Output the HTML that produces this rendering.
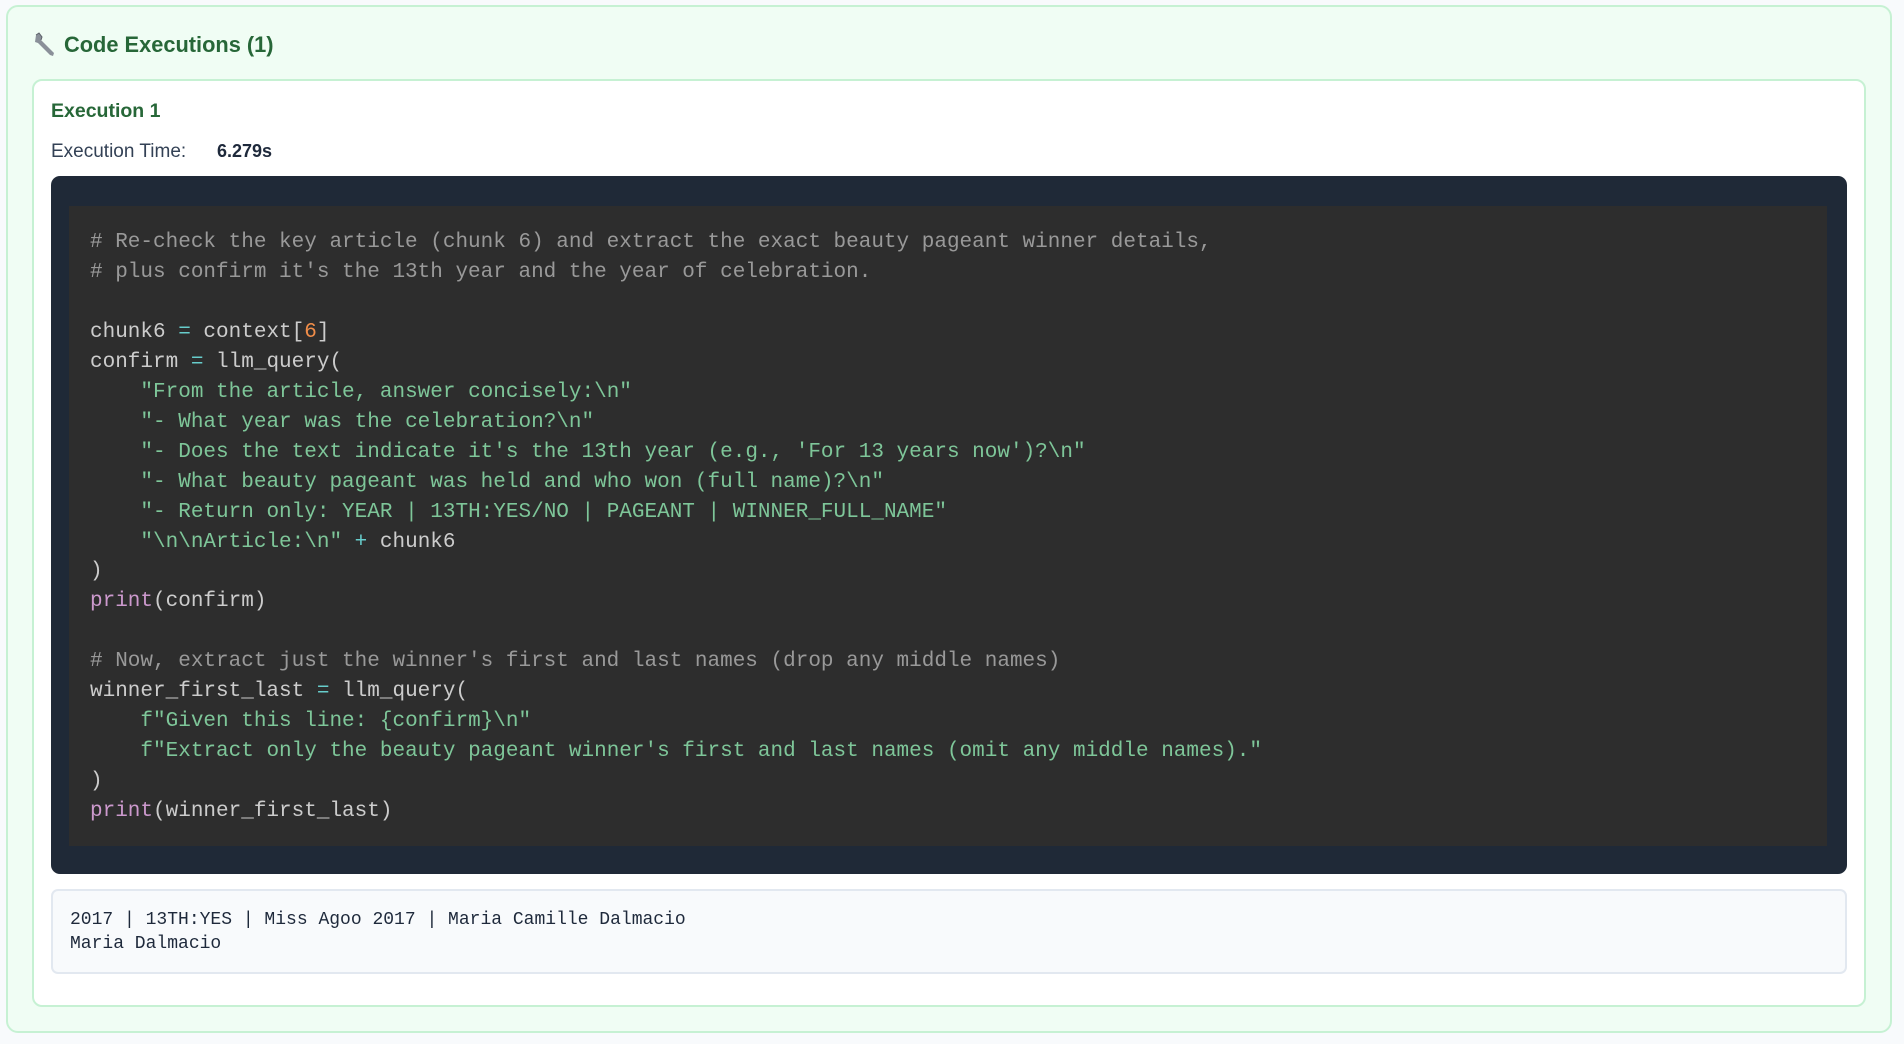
<!DOCTYPE html>
<html><head><meta charset="utf-8"><style>
*{box-sizing:border-box;margin:0;padding:0}
body{width:1904px;height:1044px;background:#f8fafc;font-family:"Liberation Sans",sans-serif;position:relative;overflow:hidden}
.outer{position:absolute;left:6px;top:5px;width:1886px;height:1028px;background:#f0fdf4;border:2px solid #c6f1d3;border-radius:12px}
.title{position:absolute;left:32px;top:32px;font-size:21.8px;font-weight:bold;color:#276738;display:flex;align-items:center;gap:6px}
.card{position:absolute;left:32px;top:79px;width:1834px;height:928px;background:#fff;border:2px solid #c6f1d3;border-radius:10px}
.h{position:absolute;left:51px;top:100px;font-size:19.5px;font-weight:bold;color:#276738}
.t{position:absolute;left:51px;top:141px;font-size:19px;color:#334155}
.t b{position:absolute;left:166px;top:0;font-size:18px;color:#1e293b;white-space:nowrap}
.dark{position:absolute;left:51px;top:176px;width:1796px;height:698px;background:#1f2937;border-radius:9px}
.code{position:absolute;left:69px;top:206px;width:1758px;height:640px;background:#2d2d2d;padding:22px 0 0 21px;font-family:"Liberation Mono",monospace;font-size:21px;line-height:29.95px;color:#ccc;white-space:pre}
.c{color:#999}.s{color:#7ec699}.k{color:#cc99cd}.n{color:#f08d49}.o{color:#67cdcc}
.out{position:absolute;left:51px;top:889px;width:1796px;height:85px;background:#f8fafc;border:2px solid #e2e8f0;border-radius:7px;padding:17px 0 0 17px;font-family:"Liberation Mono",monospace;font-size:18px;line-height:24px;color:#1e293b;white-space:pre}
</style></head><body>
<div class="outer"></div>
<div class="title"><svg width="26" height="26" viewBox="0 0 26 26"><path d="M4 3 L7 1 L10 5 L9 8 L22 21 L21 24 L18 23 L6 11 L3 10 Z" fill="#8a9099"/><path d="M4 3 L7 1 L10 5 L9 8" fill="none" stroke="#5b6068" stroke-width="1"/></svg>Code Executions (1)</div>
<div class="card"></div>
<div class="h">Execution 1</div>
<div class="t">Execution Time:<b>6.279s</b></div>
<div class="dark"></div>
<div class="code"><span class="c"># Re-check the key article (chunk 6) and extract the exact beauty pageant winner details,</span>
<span class="c"># plus confirm it's the 13th year and the year of celebration.</span>

chunk6 <span class="o">=</span> context[<span class="n">6</span>]
confirm <span class="o">=</span> llm_query(
    <span class="s">"From the article, answer concisely:\n"</span>
    <span class="s">"- What year was the celebration?\n"</span>
    <span class="s">"- Does the text indicate it's the 13th year (e.g., 'For 13 years now')?\n"</span>
    <span class="s">"- What beauty pageant was held and who won (full name)?\n"</span>
    <span class="s">"- Return only: YEAR | 13TH:YES/NO | PAGEANT | WINNER_FULL_NAME"</span>
    <span class="s">"\n\nArticle:\n"</span> <span class="o">+</span> chunk6
)
<span class="k">print</span>(confirm)

<span class="c"># Now, extract just the winner's first and last names (drop any middle names)</span>
winner_first_last <span class="o">=</span> llm_query(
    <span class="s">f"Given this line: {confirm}\n"</span>
    <span class="s">f"Extract only the beauty pageant winner's first and last names (omit any middle names)."</span>
)
<span class="k">print</span>(winner_first_last)</div>
<div class="out">2017 | 13TH:YES | Miss Agoo 2017 | Maria Camille Dalmacio
Maria Dalmacio</div>
</body></html>
